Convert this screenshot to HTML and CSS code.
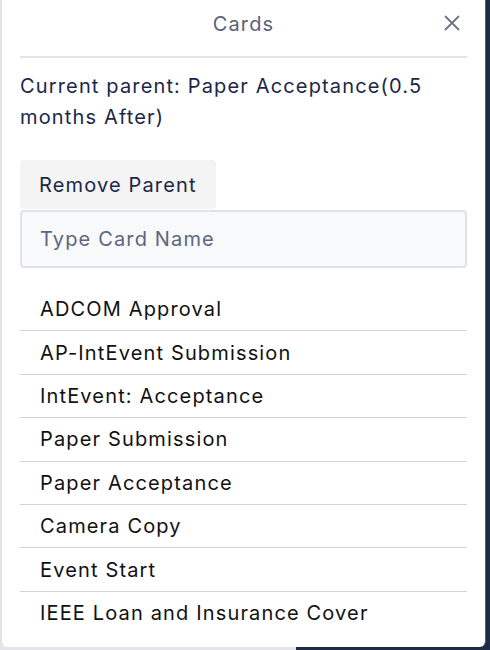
FILE: index.html
```html
<!DOCTYPE html>
<html>
<head>
<meta charset="utf-8">
<link rel="stylesheet" href="styles.css">
</head>
<body>
<div class="panel">
  <div class="header">
    <span class="title">Cards</span>
    <svg class="close" width="16" height="16" viewBox="0 0 16 16"><path d="M1.5 1.5 L14.5 14.5 M14.5 1.5 L1.5 14.5" stroke="#6b7385" stroke-width="1.8" stroke-linecap="round" fill="none"/></svg>
  </div>
  <p class="current">Current parent: Paper Acceptance(0.5 months After)</p>
  <button class="remove">Remove Parent</button>
  <input class="search" type="text" placeholder="Type Card Name">
  <ul class="list">
    <li>ADCOM Approval</li>
    <li>AP-IntEvent Submission</li>
    <li>IntEvent: Acceptance</li>
    <li>Paper Submission</li>
    <li>Paper Acceptance</li>
    <li>Camera Copy</li>
    <li>Event Start</li>
    <li>IEEE Loan and Insurance Cover</li>
  </ul>
</div>
</body>
</html>
```
FILE: styles.css
```css
html, body {
  margin: 0;
  padding: 0;
  height: 100%;
}
body {
  background: linear-gradient(to right, #e3e4e8 0, #e3e4e8 296px, #1c2b48 296px);
  font-family: Inter, "Noto Sans", sans-serif;
  letter-spacing: 1.15px;
}
.panel {
  box-sizing: border-box;
  width: 486px;
  height: 647px;
  background: #fff;
  border-left: 2px solid #e2e3e7;
  border-right: 1px solid #5a5d66;
  border-radius: 0 0 6px 6px;
  padding: 0 18px 0 18px;
  display: flex;
  flex-direction: column;
}
.header {
  position: relative;
  height: 56px;
  border-bottom: 2px solid #e3e3e8;
  display: flex;
  align-items: center;
  justify-content: center;
}
.title {
  font-size: 20px;
  color: #59627a;
  margin-top: -9px;
}
.close {
  position: absolute;
  right: 7px;
  top: 15px;
}
.current {
  margin: 13px 0 0 0;
  font-size: 20px;
  line-height: 31px;
  color: #1b2748;
}
.remove {
  align-self: flex-start;
  margin-top: 27px;
  height: 49px;
  padding: 0 19px;
  border: none;
  border-radius: 4px;
  background: #f4f4f5;
  font-family: inherit;
  letter-spacing: inherit;
  font-size: 20px;
  color: #1b2748;
}
.search {
  box-sizing: border-box;
  margin: 1px 0 0 0;
  height: 58px;
  width: 100%;
  border: 2px solid #e1e2e6;
  border-radius: 4px;
  background: #f8f9fb;
  padding: 0 18px;
  font-family: inherit;
  letter-spacing: inherit;
  font-size: 20px;
  color: #1b2748;
  outline: none;
}
.search::placeholder {
  color: #5c6680;
}
.list {
  list-style: none;
  margin: 20px 0 0 0;
  padding: 0;
}
.list li {
  box-sizing: border-box;
  height: 43.4px;
  display: flex;
  align-items: center;
  padding: 0 20px;
  font-size: 20px;
  color: #111;
  border-bottom: 1.5px solid #d3d3d6;
}
.list li:last-child {
  border-bottom: none;
}
```
